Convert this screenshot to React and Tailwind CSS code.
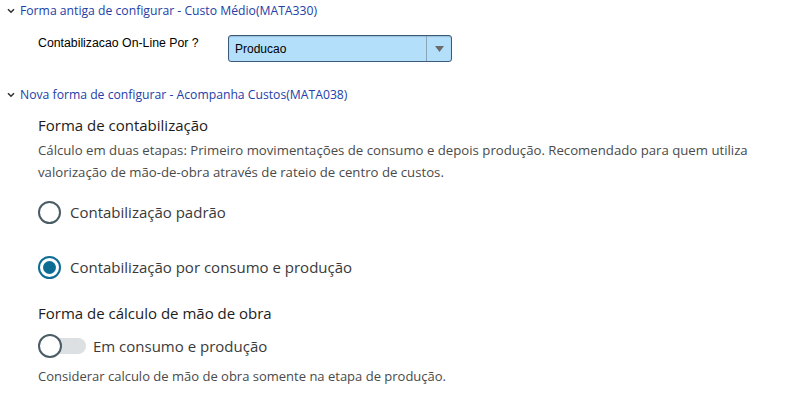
import React from 'react';

const Chevron = () => (
  <svg width="8" height="6" viewBox="0 0 8 6" className="mr-[5px] shrink-0">
    <path d="M1 1.2 L4 4.2 L7 1.2" fill="none" stroke="#333" strokeWidth="1.6" />
  </svg>
);

function Radio({ checked, label }) {
  return (
    <div className="flex items-center h-[24px]">
      <span
        className={
          'w-[23px] h-[23px] rounded-full border-2 flex items-center justify-center shrink-0 ' +
          (checked ? 'border-[#0c6c94]' : 'border-[#4a5c66]')
        }
      >
        {checked && <span className="w-[13px] h-[13px] rounded-full bg-[#0c6c94]" />}
      </span>
      <span className="ml-[9px] text-[15px] text-[#3a3a3a]">{label}</span>
    </div>
  );
}

export default function App() {
  return (
    <div className="w-[796px] h-[409px] bg-white overflow-hidden relative">
      {/* Old config */}
      <div
        className="flex items-center pl-[7px] h-[22px] text-[12.2px] text-[#2340a8]"
        style={{ fontFamily: '"Open Sans", "Noto Sans", sans-serif' }}
      >
        <Chevron />
        <span>Forma antiga de configurar - Custo Médio(MATA330)</span>
      </div>

      <div className="flex items-start pl-[38px] mt-[14px] h-[28px]" style={{ fontFamily: '"Liberation Sans", Arial, sans-serif' }}>
        <span className="text-[12.3px] text-black w-[190px] leading-[14px]">Contabilizacao On-Line Por ?</span>
        <div className="flex h-[27px] w-[224px] -mt-[1px] rounded-[3px] border border-[#3b5a7a] bg-[#b3dffb] shadow-[inset_0_1px_1px_rgba(0,0,0,0.15)]">
          <span className="flex-1 flex items-center pl-[6px] text-[12px] text-black">Producao</span>
          <span className="w-[25px] border-l border-[#8aa4b8] flex items-center justify-center">
            <svg width="9" height="6" viewBox="0 0 9 6">
              <path d="M0 0 H9 L4.5 6 Z" fill="#6b6b6b" />
            </svg>
          </span>
        </div>
      </div>

      {/* New config */}
      <div
        className="flex items-center pl-[7px] mt-[20px] h-[22px] text-[12.2px] text-[#2340a8]"
        style={{ fontFamily: '"Open Sans", "Noto Sans", sans-serif' }}
      >
        <Chevron />
        <span>Nova forma de configurar - Acompanha Custos(MATA038)</span>
      </div>

      <div className="pl-[38px] pr-4 mt-[8px]" style={{ fontFamily: '"Open Sans", "Noto Sans", sans-serif' }}>
        <div className="text-[15px] font-medium text-[#1c1c1c] leading-[22px]">Forma de contabilização</div>
        <p className="mt-[3px] text-[13.2px] leading-[22px] text-[#4a4a4a] max-w-[724px]">
          Cálculo em duas etapas: Primeiro movimentações de consumo e depois produção. Recomendado para quem utiliza
          valorização de mão-de-obra através de rateio de centro de custos.
        </p>

        <div className="mt-[17px] flex flex-col gap-[31px]">
          <Radio label="Contabilização padrão" />
          <Radio checked label="Contabilização por consumo e produção" />
        </div>

        <div className="mt-[23px] text-[15px] font-medium text-[#1c1c1c] leading-[22px]">Forma de cálculo de mão de obra</div>

        <div className="flex items-center mt-[10px] h-[24px]">
          <div className="relative w-[48px] h-[24px] shrink-0">
            <span className="absolute left-[12px] top-[4px] w-[36px] h-[16px] rounded-full bg-[#dde0e2]" />
            <span className="absolute left-0 top-0 w-[24px] h-[24px] rounded-full border-2 border-[#4a5c66] bg-white" />
          </div>
          <span className="ml-[7px] text-[15px] text-[#3a3a3a]">Em consumo e produção</span>
        </div>

        <p className="mt-[7px] text-[13px] leading-[22px] text-[#4a4a4a]">
          Considerar calculo de mão de obra somente na etapa de produção.
        </p>
      </div>
    </div>
  );
}
